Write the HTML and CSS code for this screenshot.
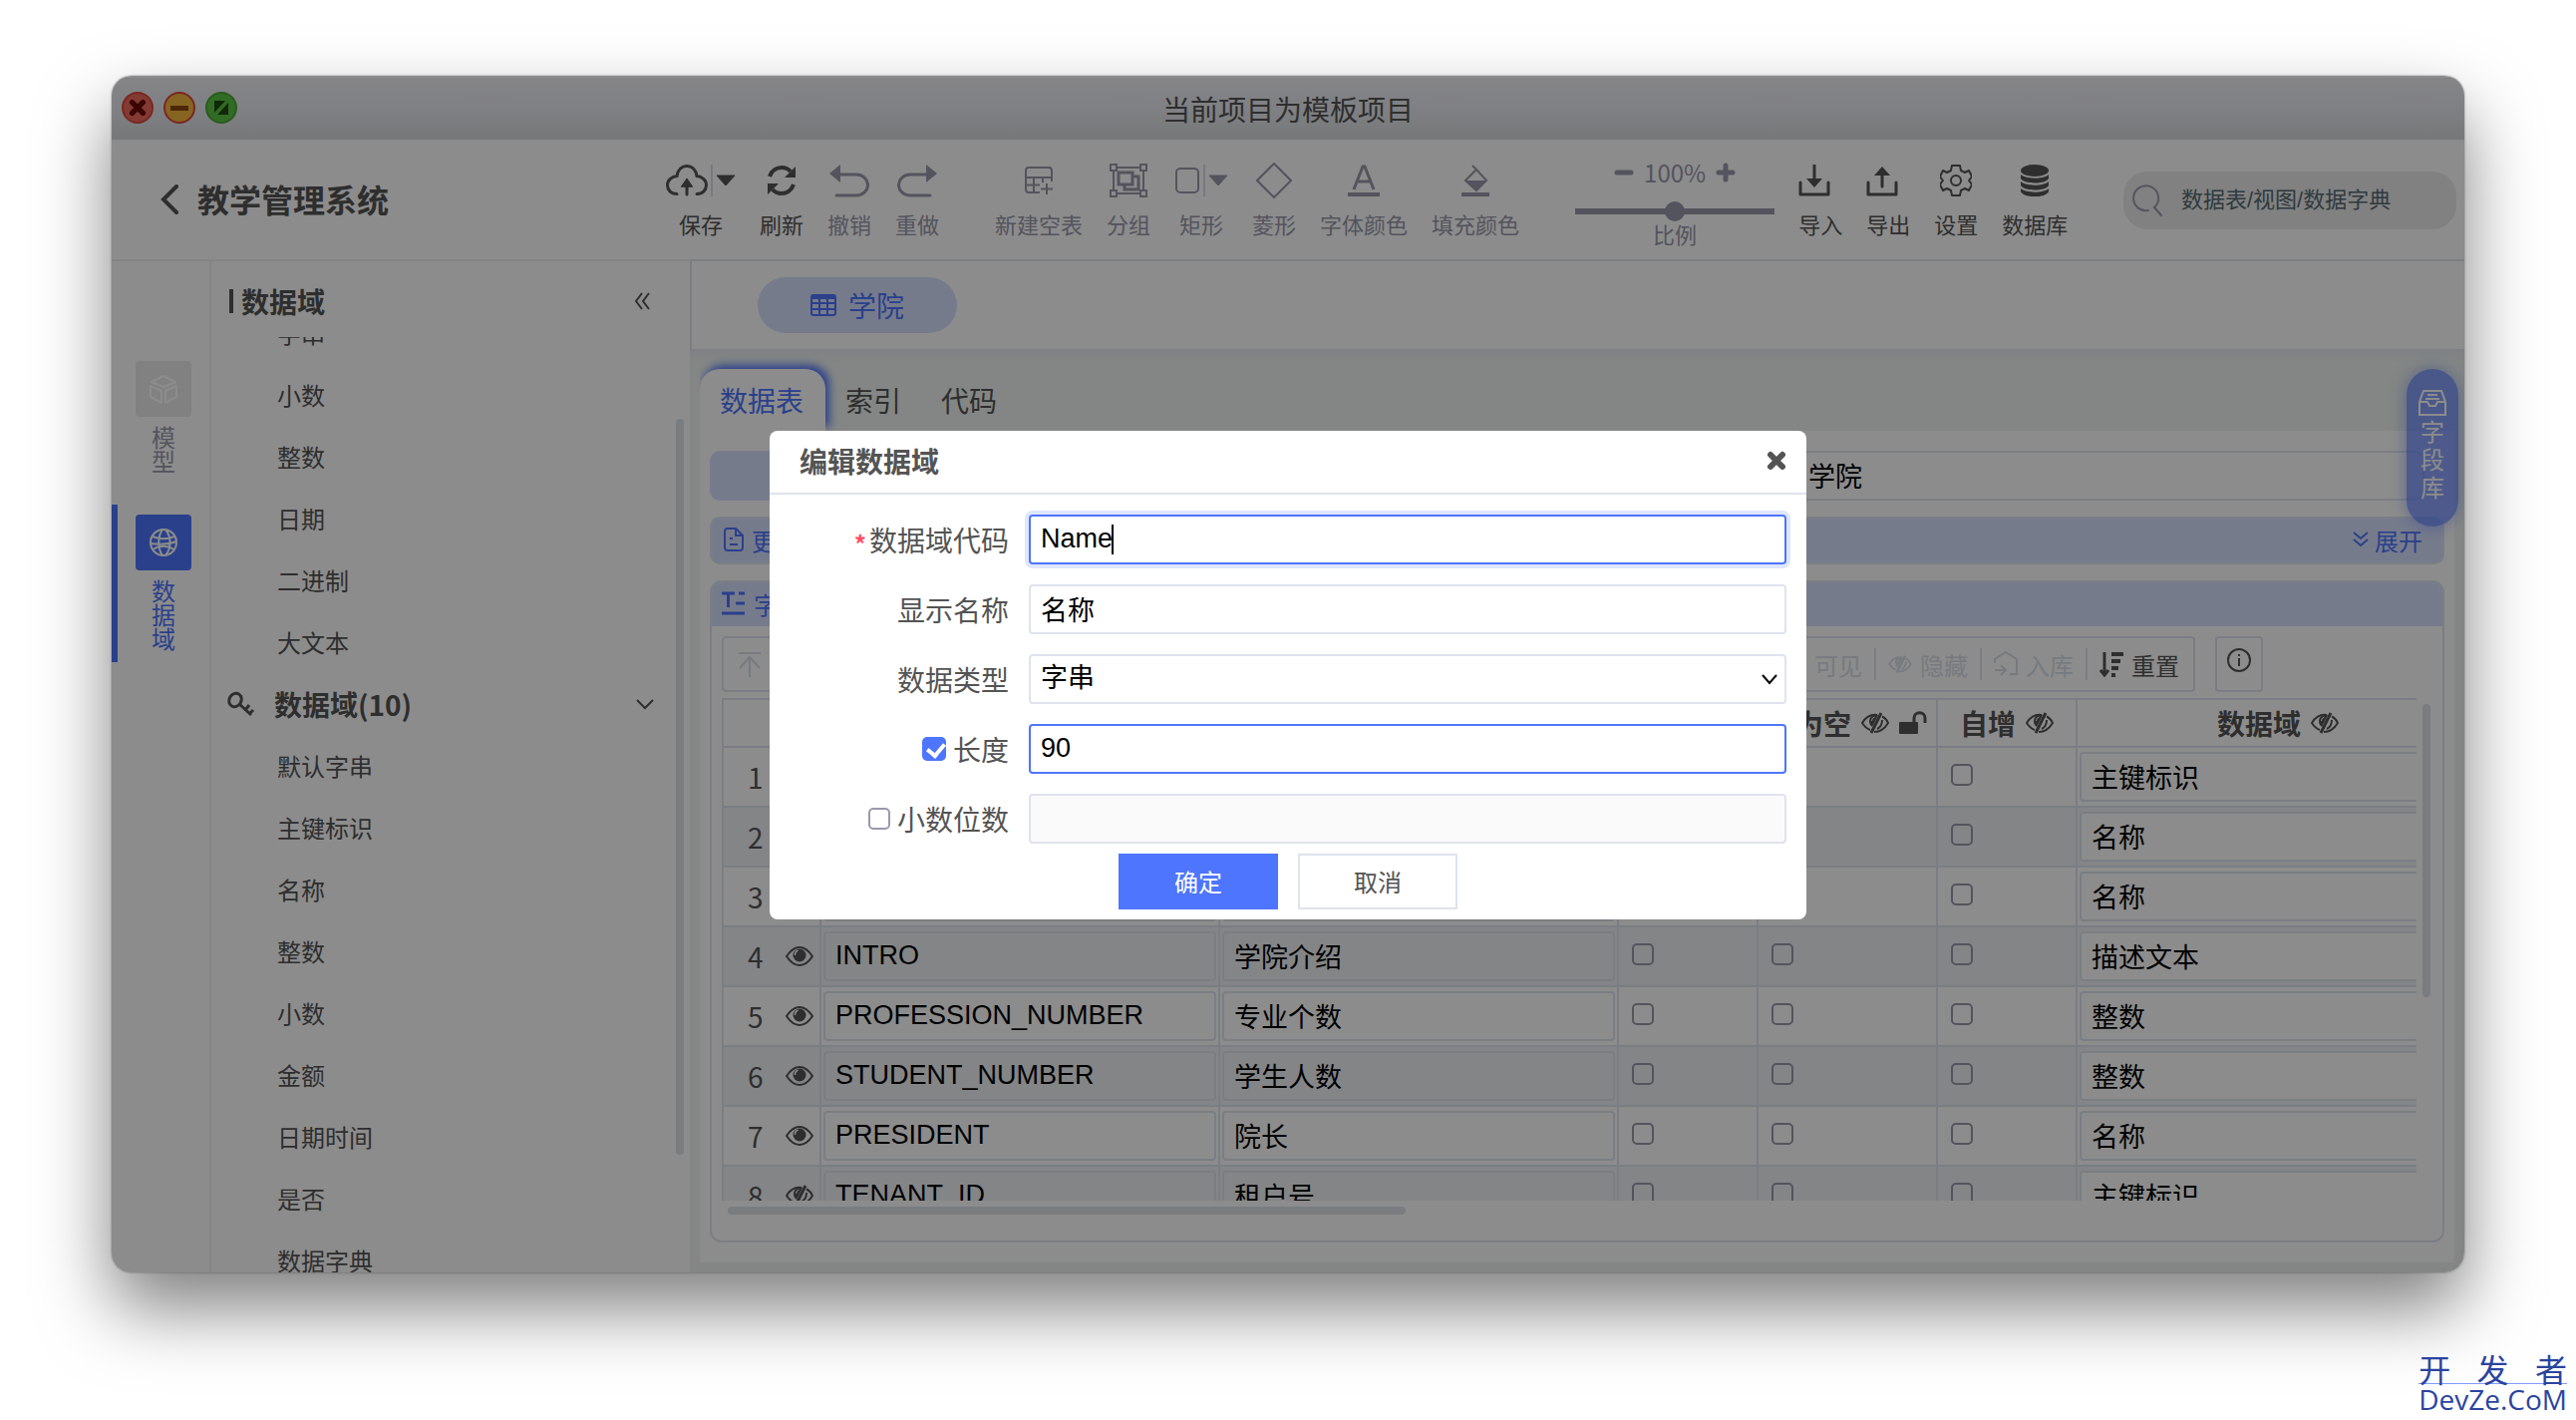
FILE: index.html
```html
<!DOCTYPE html>
<html lang="zh-CN">
<head>
    <meta charset="UTF-8">
    <meta name="viewport" content="width=device-width, initial-scale=1.0">
    <title>教学管理系统</title>
    <link rel="stylesheet" href="styles.css">
</head>
<body>
    <svg class="symbols" aria-hidden="true">
        <symbol id="i-eye" viewBox="0 0 28 24">
            <path d="M1 12C5 6 9 3 14 3S23 6 27 12C23 18 19 21 14 21S5 18 1 12z" fill="none" stroke="currentColor" stroke-width="2"/>
            <circle cx="14" cy="11" r="6.500" fill="currentColor"/>
            <path d="M9.500 11a5 5 0 0 1 3-5" fill="none" stroke="#fff" stroke-width="1.500"/>
        </symbol>
        <symbol id="i-eye-off" viewBox="0 0 28 24">
            <path d="M16 4C9 3 4 7 1 12c2 3 5 6 8 7M21 5.500c3 1.500 5 4 6 6.500-3 5-8 9-14 9M21 9c0 4-1 7-5 9" fill="none" stroke="currentColor" stroke-width="2"/>
            <path d="M17 4c-5-1-9 2-9 6 0 3 1 4 3 6z" fill="currentColor"/>
            <path d="M20 2L10 22" stroke="currentColor" stroke-width="3"/>
            <path d="M10.500 10a4 4 0 0 1 3-4" fill="none" stroke="#fff" stroke-width="1"/>
        </symbol>
        <symbol id="i-close" viewBox="0 0 20 20">
            <path d="M4 4l12 12M16 4L4 16" stroke="currentColor" stroke-width="6" stroke-linecap="round"/>
        </symbol>
        <symbol id="i-caret" viewBox="0 0 20 12"><path d="M1 1h18l-9 10z" fill="currentColor" stroke="currentColor" stroke-linejoin="round"/></symbol>
    </svg>

    <div class="window">
        <div class="titlebar">
            <div class="lights">
                <span class="light light-red"><svg width="18" height="18"><use href="#i-close"/></svg></span>
                <span class="light light-yellow"></span>
                <span class="light light-green"><svg width="16" height="16" viewBox="0 0 16 16"><path d="M1 1h11L1 13zM15 3v12H4z" fill="currentColor"/></svg></span>
            </div>
            <span>当前项目为模板项目</span>
        </div>

        <header class="header">
            <div class="brand">
                <svg width="20" height="30" viewBox="0 0 20 30"><path d="M17 2L4 15l13 13" fill="none" stroke="currentColor" stroke-width="4" stroke-linecap="round"/></svg>
                <h1>教学管理系统</h1>
            </div>
            <div class="tools">
                <button class="tool tool-split">
                    <span class="tool-icon">
                        <svg width="42" height="32" viewBox="0 0 42 32" fill="none" stroke="currentColor" stroke-width="3" stroke-linecap="round"><path d="M11 29.500C5 29.500 1.500 25.500 1.500 20.500S6 12 11 11.500C12 5 16 1.500 21 1.500S30 5 31 11.500C36 12 40.500 15.500 40.500 20.500S37 29.500 31 29.500M21 22v8"/><path d="M15.500 22L21 14l5.500 8z" fill="currentColor" stroke-width="1"/></svg>
                        <i class="split"></i>
                        <svg width="20" height="12"><use href="#i-caret"/></svg>
                    </span>
                    保存
                </button>
                <button class="tool">
                    <span class="tool-icon">
                        <svg width="30" height="34" viewBox="0 0 30 34"><path d="M3 13C5 7 10 4 15 4c4 0 7 1.500 9 4M27 21c-2 6-7 9-12 9-4 0-7-1.500-9-4" fill="none" stroke="currentColor" stroke-width="4"/><path d="M29 3v11H18zM1 31V20h11z" fill="currentColor"/></svg>
                    </span>
                    刷新
                </button>
                <button class="tool muted">
                    <span class="tool-icon">
                        <svg width="40" height="34" viewBox="0 0 40 34"><path d="M6 11h21a11 10 0 0 1 0 21H7" fill="none" stroke="currentColor" stroke-width="3" stroke-linecap="round"/><path d="M0 10L11 1v18z" fill="currentColor"/></svg>
                    </span>
                    撤销
                </button>
                <button class="tool muted">
                    <span class="tool-icon">
                        <svg width="40" height="34" viewBox="0 0 40 34"><path d="M34 11H13a11 10 0 0 0 0 21h20" fill="none" stroke="currentColor" stroke-width="3" stroke-linecap="round"/><path d="M40 10L29 1v18z" fill="currentColor"/></svg>
                    </span>
                    重做
                </button>
                <button class="tool muted tool-first">
                    <span class="tool-icon">
                        <svg width="28" height="28" viewBox="0 0 28 28" fill="none" stroke="currentColor" stroke-width="2"><path d="M15 26H4a3 3 0 0 1-3-3V4a3 3 0 0 1 3-3h20a3 3 0 0 1 3 3v11M1 11h26M1 18.500h14M9 11v15M18 11v5M22 17v11M16 22.500h12"/></svg>
                    </span>
                    新建空表
                </button>
                <button class="tool muted">
                    <span class="tool-icon">
                        <svg width="38" height="34" viewBox="0 0 38 34" fill="none" stroke="currentColor" stroke-width="2"><path d="M4 6v22M34 6v22M7 4h24M7 30h24"/><path d="M1 1h6v6H1zM31 1h6v6h-6zM1 27h6v6H1zM31 27h6v6h-6z"/><path d="M9 9h14v12H9zM23 13h6v13H15v-5" stroke-width="3"/></svg>
                    </span>
                    分组
                </button>
                <button class="tool muted tool-split">
                    <span class="tool-icon">
                        <svg width="26" height="28" viewBox="0 0 26 28"><rect x="2" y="2" width="22" height="24" rx="4" fill="none" stroke="currentColor" stroke-width="2"/></svg>
                        <i class="split"></i>
                        <svg width="20" height="12"><use href="#i-caret"/></svg>
                    </span>
                    矩形
                </button>
                <button class="tool muted">
                    <span class="tool-icon">
                        <svg width="36" height="36" viewBox="0 0 36 36"><path d="M18 1l17 17-17 17L1 18z" fill="none" stroke="currentColor" stroke-width="2"/></svg>
                    </span>
                    菱形
                </button>
                <button class="tool muted">
                    <span class="tool-icon">
                        <svg width="32" height="32" viewBox="0 0 32 32"><path d="M6 25L15 2h2l9 23M9 17h14" fill="none" stroke="currentColor" stroke-width="3"/><path d="M0 28h32v4H0z" fill="currentColor"/></svg>
                    </span>
                    字体颜色
                </button>
                <button class="tool muted">
                    <span class="tool-icon">
                        <svg width="28" height="32" viewBox="0 0 28 32"><path d="M11 1l4 4 10 11-10 10L4 16 15 5" fill="none" stroke="currentColor" stroke-width="2"/><path d="M4 16h21L15 27zM0 28h28v4H0z" fill="currentColor"/></svg>
                    </span>
                    填充颜色
                </button>
                <div class="zoom muted tool-first">
                    <div class="zoom-value">
                        <button aria-label="缩小"><svg width="20" height="20" viewBox="0 0 20 20"><path d="M3 10h14" stroke="currentColor" stroke-width="5" stroke-linecap="round"/></svg></button>
                        100%
                        <button aria-label="放大"><svg width="20" height="20" viewBox="0 0 20 20"><path d="M3 10h14M10 3v14" stroke="currentColor" stroke-width="5" stroke-linecap="round"/></svg></button>
                    </div>
                    <input type="range" id="scale" min="0" max="200" value="100">
                    <label for="scale">比例</label>
                </div>
                <button class="tool">
                    <span class="tool-icon icon-left">
                        <svg width="32" height="32" viewBox="0 0 32 32"><path d="M2 18v12h28V18M16 1v18" fill="none" stroke="currentColor" stroke-width="3" stroke-linecap="round" stroke-linejoin="round"/><path d="M8 14h16l-8 9z" fill="currentColor"/></svg>
                    </span>
                    导入
                </button>
                <button class="tool">
                    <span class="tool-icon icon-left">
                        <svg width="32" height="32" viewBox="0 0 32 32"><path d="M2 18v12h28V18M16 8v14" fill="none" stroke="currentColor" stroke-width="3" stroke-linecap="round" stroke-linejoin="round"/><path d="M8 11h16l-8-9z" fill="currentColor"/></svg>
                    </span>
                    导出
                </button>
                <button class="tool">
                    <span class="tool-icon">
                        <svg width="32" height="32" viewBox="0 0 32 32" fill="none" stroke="currentColor" stroke-width="2" stroke-linejoin="round"><path d="M12 1h8l1 5 4 2 4-2 3 6-3 4 3 4-3 6-4-2-4 2-1 5h-8l-1-5-4-2-4 2-3-6 3-4-3-4 3-6 4 2 4-2z"/><circle cx="16" cy="16" r="5"/></svg>
                    </span>
                    设置
                </button>
                <button class="tool">
                    <span class="tool-icon">
                        <svg width="28" height="32" viewBox="0 0 28 32" fill="currentColor"><ellipse cx="14" cy="6" rx="14" ry="6"/><path d="M0 10c5 5 23 5 28 0v4c-3 6-25 6-28 0zM0 17c5 5 23 5 28 0v4c-3 6-25 6-28 0zM0 24c5 5 23 5 28 0v3c-3 7-25 7-28 0z"/></svg>
                    </span>
                    数据库
                </button>
            </div>
            <div class="search">
                <svg width="32" height="32" viewBox="0 0 32 32"><path d="M17 26A12.500 12.500 0 1 1 23 23l7 8" fill="none" stroke="currentColor" stroke-width="2" stroke-linecap="round"/></svg>
                <input type="text" placeholder="数据表/视图/数据字典" aria-label="搜索">
            </div>
        </header>

        <div class="body">
            <nav class="nav">
                <a href="#" class="nav-item">
                    <span class="nav-icon"><svg width="28" height="30" viewBox="0 0 28 30" fill="none" stroke="currentColor" stroke-width="2" stroke-linejoin="round"><path d="M14 2l12 6-12 5L2 8zM1 12l11 5v12L1 23zM27 12l-11 5v12l11-6z"/></svg></span>
                    <span class="nav-text">模型</span>
                </a>
                <a href="#" class="nav-item active">
                    <span class="nav-icon"><svg width="30" height="30" viewBox="0 0 30 30" fill="none" stroke="currentColor" stroke-width="2"><circle cx="15" cy="15" r="13"/><path d="M14 2C9 9 9 21 14 28M17 2c6 7 6 19 0 26M4 9c7 3 15 3 22 0M4 22c7-4 15-4 22 0M2 16c8 1 18 1 26-2"/></svg></span>
                    <span class="nav-text">数据域</span>
                </a>
            </nav>

            <aside class="sidebar">
                <div class="sidebar-head">
                    <h2>数据域</h2>
                    <button aria-label="收起"><svg width="16" height="18" viewBox="0 0 16 18"><path d="M8 1L2 9l6 8M15 1L9 9l6 8" fill="none" stroke="currentColor" stroke-width="2"/></svg></button>
                </div>
                <div class="tree">
                    <ul>
                        <li>字串</li>
                        <li>小数</li>
                        <li>整数</li>
                        <li>日期</li>
                        <li>二进制</li>
                        <li>大文本</li>
                        <li class="group">
                            <svg width="28" height="26" viewBox="0 0 28 26" fill="none" stroke="currentColor"><ellipse cx="9" cy="9" rx="6" ry="7" transform="rotate(30 9 9)" stroke-width="3"/><path d="M13 13l12 11M19 19l4-5M23 23l4-4" stroke-width="3"/></svg>
                            数据域(10)
                            <svg class="arrow" width="18" height="12" viewBox="0 0 18 12"><path d="M1 2l8 8 8-8" fill="none" stroke="currentColor" stroke-width="2"/></svg>
                        </li>
                        <li>默认字串</li>
                        <li>主键标识</li>
                        <li>名称</li>
                        <li>整数</li>
                        <li>小数</li>
                        <li>金额</li>
                        <li>日期时间</li>
                        <li>是否</li>
                        <li>数据字典</li>
                    </ul>
                    <div class="tree-scroll"></div>
                </div>
            </aside>

            <main class="main">
                <div class="tabs">
                    <button class="tab">
                        <svg width="26" height="24" viewBox="0 0 26 24" fill="none" stroke="currentColor" stroke-width="2"><rect x="1" y="2" width="24" height="20" rx="2"/><path d="M1 4h24" stroke-width="4"/><path d="M1 10h24M1 16h24M9 4v18M17 4v18"/></svg>
                        学院
                    </button>
                </div>
                <div class="content">
                    <div class="subtabs">
                        <button class="subtab active">数据表</button>
                        <button class="subtab">索引</button>
                        <button class="subtab">代码</button>
                    </div>
                    <div class="panel">
                        <div class="names">
                            <label for="table-code">表代码</label>
                            <input type="text" id="table-code" value="COLLEGE">
                            <label for="table-name">显示名称</label>
                            <input type="text" id="table-name" value="学院">
                        </div>
                        <div class="more">
                            <svg width="20" height="24" viewBox="0 0 20 24" fill="none" stroke="currentColor" stroke-width="2"><path d="M12 1H4a3 3 0 0 0-3 3v16a3 3 0 0 0 3 3h12a3 3 0 0 0 3-3V8zM12 1v7h7M6 11h3M6 17h8"/></svg>
                            更多设置
                            <a href="#" class="expand"><svg width="16" height="16" viewBox="0 0 16 16"><path d="M1 1l7 6 7-6M1 8l7 6 7-6" fill="none" stroke="currentColor" stroke-width="2"/></svg>展开</a>
                        </div>
                        <section class="fields">
                            <h3>
                                <svg width="24" height="24" viewBox="0 0 24 24" fill="none" stroke="currentColor" stroke-width="3"><path d="M0 2h13M6.500 2v14M17 2h6M14 12h9M0 22h23"/></svg>
                                字段列表
                            </h3>
                            <div class="bar-row">
                                <div class="bar">
                                    <button disabled><svg width="24" height="28" viewBox="0 0 24 28" fill="none" stroke="currentColor" stroke-width="2"><path d="M1 3h22M12 8v19M2 18L12 7l10 11"/></svg>置顶</button>
                                    <button disabled class="push"><svg width="24" height="20"><use href="#i-eye"/></svg>可见</button>
                                    <button disabled><svg width="24" height="20"><use href="#i-eye-off"/></svg>隐藏</button>
                                    <button disabled><svg width="24" height="26" viewBox="0 0 24 26" fill="none" stroke="currentColor" stroke-width="2"><path d="M1 12V8l11-7 11 7v15h-7M1 19h10M7 14l5 5-5 5"/></svg>入库</button>
                                    <button><svg width="24" height="26" viewBox="0 0 24 26" fill="none" stroke="currentColor" stroke-width="4"><path d="M5 1v22" stroke-width="3"/><path d="M1 19l4 5 4-5" stroke-width="3"/><path d="M12 3h12M12 10h9M12 17h7M12 24h4"/></svg>重置</button>
                                </div>
                                <button class="info" aria-label="说明"><svg width="24" height="24" viewBox="0 0 24 24" fill="none" stroke="currentColor" stroke-width="2"><circle cx="12" cy="12" r="11"/><path d="M12 10v8M12 6v2"/></svg></button>
                            </div>
                            <div class="table-area">
                                <div class="table-clip">
                                    <table>
                                        <colgroup>
                                            <col class="c-no"><col class="c-code"><col class="c-name"><col class="c-key"><col class="c-null"><col class="c-auto"><col class="c-domain">
                                        </colgroup>
                                        <thead>
                                            <tr>
                                                <th></th>
                                                <th>字段代码</th>
                                                <th>显示名称</th>
                                                <th>主键</th>
                                                <th><span>不为空 <svg width="28" height="24"><use href="#i-eye-off"/></svg><svg width="28" height="24" viewBox="0 0 28 24"><rect y="11" width="19" height="12" rx="1" fill="currentColor"/><path d="M15 11V7c0-7 11-7 11 0v5" fill="none" stroke="currentColor" stroke-width="3"/></svg></span></th>
                                                <th><span>自增 <svg width="28" height="24"><use href="#i-eye-off"/></svg></span></th>
                                                <th><span>数据域 <svg width="28" height="24"><use href="#i-eye-off"/></svg></span></th>
                                            </tr>
                                        </thead>
                                        <tbody id="rows"></tbody>
                                    </table>
                                </div>
                                <div class="scroll-y"></div>
                                <div class="scroll-x"></div>
                            </div>
                        </section>
                    </div>
                </div>
                <button class="library">
                    <svg width="28" height="28" viewBox="0 0 28 28" fill="none" stroke="currentColor" stroke-width="2"><path d="M1 13L5 2h18l4 11v13H1zM1 13h8l2 4h6l2-4h8M9 6h10M7 10h14"/></svg>
                    <span>字段库</span>
                </button>
            </main>
        </div>

        <div class="mask">
            <form class="dialog" role="dialog" aria-labelledby="dialog-title">
                <div class="dialog-head">
                    <h2 id="dialog-title">编辑数据域</h2>
                    <button type="button" aria-label="关闭"><svg width="20" height="20"><use href="#i-close"/></svg></button>
                </div>
                <div class="dialog-body">
                    <label for="code"><b class="required">*</b>数据域代码</label>
                    <div class="focus-field">
                        <input type="text" id="code" class="field focused" value="Name">
                        <i class="text-caret"></i>
                    </div>

                    <label for="label">显示名称</label>
                    <input type="text" id="label" class="field" value="名称">

                    <label for="type">数据类型</label>
                    <div class="select">
                        <select id="type" class="field">
                            <option>字串</option>
                            <option>小数</option>
                            <option>整数</option>
                        </select>
                        <svg width="18" height="12" viewBox="0 0 18 12"><path d="M2 2l7 8 7-8" fill="none" stroke="currentColor" stroke-width="2"/></svg>
                    </div>

                    <label><input type="checkbox" class="check" checked>长度</label>
                    <input type="text" class="field outlined" value="90" aria-label="长度">

                    <label><input type="checkbox" class="check">小数位数</label>
                    <input type="text" class="field" disabled aria-label="小数位数">
                </div>
                <div class="dialog-foot">
                    <button type="button" class="btn primary">确定</button>
                    <button type="button" class="btn">取消</button>
                </div>
            </form>
        </div>
    </div>

    <div class="watermark">
        <div class="watermark-cn"><span>开</span><span>发</span><span>者</span></div>
        <div>DevZe.CoM</div>
    </div>

    <script>
        const fields = [
            ['COLLEGE_ID', '学院ID', '主键标识', true],
            ['COLLEGE_NAME', '学院名称', '名称', true],
            ['ENG_NAME', '英文名', '名称', true],
            ['INTRO', '学院介绍', '描述文本', true],
            ['PROFESSION_NUMBER', '专业个数', '整数', true],
            ['STUDENT_NUMBER', '学生人数', '整数', true],
            ['PRESIDENT', '院长', '名称', true],
            ['TENANT_ID', '租户号', '主键标识', false]
        ];

        let html = '';
        fields.forEach((field, index) => {
            const [code, name, domain, visible] = field;
            html += `<tr>
                <td><div class="row-no">${index + 1}<svg width="28" height="24"><use href="#${visible ? 'i-eye' : 'i-eye-off'}"/></svg></div></td>
                <td><input type="text" value="${code}" aria-label="字段代码"></td>
                <td><input type="text" value="${name}" aria-label="显示名称"></td>
                <td><input type="checkbox" class="check" aria-label="主键"></td>
                <td><input type="checkbox" class="check" aria-label="不为空"></td>
                <td><input type="checkbox" class="check" aria-label="自增"></td>
                <td><input type="text" class="domain" value="${domain}" aria-label="数据域"></td>
            </tr>`;
        });
        document.getElementById('rows').innerHTML = html;
    </script>
</body>
</html>
```

FILE: styles.css
```css
* {
    box-sizing: border-box;
}
body {
    margin: 0;
    height: 100vh;
    padding: 76px 112px 148px;
    background: white;
    color: #545454;
    font-family: "Noto Sans CJK SC", sans-serif;
    font-size: 24px;
}
h1, h2, h3, ul {
    margin: 0;
    padding: 0;
}
button {
    border: none;
    background: none;
    padding: 0;
    color: inherit;
    font: inherit;
    cursor: pointer;
}
input, select {
    font-family: "Liberation Sans", "Noto Sans CJK SC", sans-serif;
    font-size: 27px;
    color: black;
}
a {
    color: inherit;
    text-decoration: none;
}
svg {
    display: block;
    flex: none;
}
.symbols {
    position: absolute;
    width: 0;
    height: 0;
}
.window {
    position: relative;
    height: 100%;
    display: flex;
    flex-direction: column;
    border-radius: 20px;
    overflow: hidden;
    background: white;
    box-shadow: 0 0 2px rgba(0, 0, 0, 0.5), 0 36px 72px rgba(0, 0, 0, 0.5);
}

/* title bar */
.titlebar {
    flex: none;
    height: 64px;
    padding: 0 10px;
    display: grid;
    grid-template-columns: 1fr auto 1fr;
    align-items: center;
    font-size: 28px;
    background: linear-gradient(#f0f1f5, #e8eaf0 50%, #d8dadc);
    border-top: 2px solid white;
}
.lights {
    display: flex;
    gap: 10px;
    padding-bottom: 2px;
}
.light {
    width: 32px;
    height: 32px;
    border-radius: 50%;
    display: flex;
    align-items: center;
    justify-content: center;
}
.light-red {
    background: #ee6a5e;
    border: 2px solid #e0453c;
    color: #6b0a05;
}
.light-yellow {
    background: #f5b93e;
    border: 2px solid #e0453c;
}
.light-yellow::before {
    content: "";
    width: 18px;
    height: 5px;
    background: #8a4a10;
}
.light-green {
    background: #5cc442;
    border: 2px solid #4aa836;
    color: #1a4a10;
}

/* header */
.header {
    flex: none;
    height: 120px;
    display: flex;
    align-items: flex-start;
    padding: 20px 8px 0 48px;
}
.brand {
    width: 508px;
    height: 80px;
    display: flex;
    align-items: center;
    gap: 18px;
}
.brand h1 {
    font-size: 32px;
    line-height: 32px;
    padding-bottom: 2px;
}
.tools {
    display: flex;
    align-items: flex-start;
    gap: 24px;
}
.tool {
    font-size: 22px;
    line-height: 28px;
    white-space: nowrap;
}
.tool-first {
    margin-left: 32px;
}
.tool-icon {
    height: 42px;
    margin-bottom: 8px;
    display: flex;
    align-items: center;
    justify-content: center;
}
.icon-left {
    justify-content: flex-start;
}
.split {
    width: 2px;
    height: 32px;
    margin: 0 3px;
    background: #d8dce6;
}
.muted {
    color: #9999ac;
}
.zoom {
    width: 200px;
    display: flex;
    flex-direction: column;
    align-items: center;
    font-size: 22px;
    line-height: 24px;
}
.zoom-value {
    height: 26px;
    margin-bottom: 16px;
    display: flex;
    align-items: center;
    gap: 10px;
    font-size: 24px;
}
.zoom input {
    appearance: none;
    width: 100%;
    height: 20px;
    margin: 0;
    background: none;
}
.zoom input::-webkit-slider-runnable-track {
    height: 6px;
    background: #9999ac;
}
.zoom input::-webkit-slider-thumb {
    appearance: none;
    width: 20px;
    height: 20px;
    margin-top: -7px;
    border-radius: 50%;
    background: #9999ac;
}
.search {
    width: 334px;
    height: 58px;
    margin: 12px 0 0 auto;
    padding: 0 8px;
    display: flex;
    align-items: center;
    gap: 18px;
    border-radius: 24px;
    background: #ebebeb;
    color: #9999ac;
}
.search input {
    flex: 1;
    min-width: 0;
    padding: 0;
    border: none;
    background: none;
    font-size: 22px;
}
.search input::placeholder {
    color: #576a72;
}

/* left side */
.body {
    flex: 1;
    min-height: 0;
    display: flex;
}
.nav {
    width: 100px;
    flex: none;
    padding-top: 90px;
    border-top: 2px solid #f0f0f0;
    border-right: 2px solid #f0f0f0;
    color: #9999ac;
}
.nav-item {
    margin-bottom: 20px;
    padding: 10px 0 12px;
    display: flex;
    flex-direction: column;
    align-items: center;
    gap: 8px;
    line-height: 24px;
    border-left: 6px solid transparent;
}
.nav-icon {
    width: 56px;
    height: 56px;
    display: flex;
    align-items: center;
    justify-content: center;
    border-radius: 4px;
    background: #ececec;
    color: white;
}
.nav-text {
    width: 24px;
}
.nav-item.active {
    border-left-color: #4e75fd;
    color: #4e75fd;
}
.nav-item.active .nav-icon {
    background: #4e75fd;
}
.sidebar {
    width: 480px;
    flex: none;
    display: flex;
    flex-direction: column;
    border-top: 2px solid #f0f0f0;
}
.sidebar-head {
    height: 76px;
    flex: none;
    padding: 4px 40px 0 18px;
    display: flex;
    align-items: center;
    justify-content: space-between;
}
.sidebar-head h2 {
    padding-left: 8px;
    border-left: 4px solid #545454;
    font-size: 28px;
    line-height: 24px;
}
.tree {
    position: relative;
    flex: 1;
    min-height: 0;
    overflow: hidden;
}
.tree ul {
    margin-top: -35px;
    list-style: none;
}
.tree li {
    height: 62px;
    padding-left: 66px;
    line-height: 62px;
}
.tree .group {
    display: flex;
    align-items: center;
    gap: 20px;
    padding: 0 36px 0 15px;
    font-size: 28px;
    font-weight: bold;
}
.tree .arrow {
    margin-left: auto;
}
.tree-scroll {
    position: absolute;
    top: 82px;
    right: 6px;
    bottom: 118px;
    width: 8px;
    border-radius: 4px;
    background: #dce4ea;
}

/* main */
.main {
    position: relative;
    flex: 1;
    min-width: 0;
    display: flex;
    flex-direction: column;
}
.tabs {
    flex: none;
    height: 90px;
    padding: 16px 66px;
    border-top: 2px solid #dfe6ee;
    border-left: 2px solid #dfe6ee;
}
.tab {
    width: 200px;
    height: 56px;
    display: flex;
    align-items: center;
    justify-content: center;
    gap: 12px;
    border-radius: 28px;
    background: #d8e1ff;
    color: #4e75fd;
    font-size: 28px;
}
.content {
    flex: 1;
    min-height: 0;
    display: flex;
    flex-direction: column;
    padding: 0 10px 10px;
    background: #eff4f0;
    box-shadow: inset 0 10px 8px -4px #e6eaf2;
}
.subtabs {
    flex: none;
    height: 82px;
    padding-top: 20px;
    display: flex;
    overflow: hidden;
}
.subtab {
    padding: 0 20px;
    font-size: 28px;
}
.subtab.active {
    padding-right: 22px;
    border-radius: 20px 20px 0 0;
    background: white;
    color: #4e75fd;
    box-shadow: 4px -4px 8px #4e75fd;
}
.panel {
    flex: 1;
    min-height: 0;
    display: flex;
    flex-direction: column;
    gap: 16px;
    padding: 20px 10px;
    background: white;
}
.names {
    flex: none;
    display: grid;
    grid-template-columns: 230px 1fr 230px 1fr;
    padding-right: 20px;
}
.names label {
    height: 50px;
    line-height: 50px;
    text-align: center;
    border-radius: 10px 0 0 10px;
    background: #d8e1ff;
}
.names input {
    min-width: 0;
    height: 50px;
    padding: 0 10px 2px;
    border: 2px solid #dfe6ee;
    border-radius: 0 10px 10px 0;
}
.more {
    flex: none;
    height: 48px;
    padding: 0 20px 2px 12px;
    display: flex;
    align-items: center;
    gap: 8px;
    border: 2px solid #dfe6ee;
    border-radius: 10px;
    background: #d8e1ff;
    color: #4e75fd;
}
.expand {
    margin-left: auto;
    display: flex;
    align-items: center;
    gap: 6px;
}
.fields {
    flex: 1;
    min-height: 0;
    display: flex;
    flex-direction: column;
    border: 2px solid #dfe6ee;
    border-radius: 12px;
    overflow: hidden;
}
.fields h3 {
    flex: none;
    height: 44px;
    padding: 0 0 2px 10px;
    display: flex;
    align-items: center;
    gap: 8px;
    background: #d8e1ff;
    color: #4e75fd;
    font-size: 24px;
    font-weight: normal;
}
.bar-row {
    flex: none;
    display: flex;
    gap: 20px;
    margin: 10px 180px 6px 10px;
}
.bar {
    flex: 1;
    height: 56px;
    display: flex;
    align-items: center;
    padding: 0 2px;
    border: 2px solid #dfe6ee;
    border-radius: 4px;
}
.bar button {
    height: 32px;
    padding: 0 12px;
    display: flex;
    align-items: center;
    gap: 8px;
    border-left: 2px solid #dfe6ee;
}
.bar button:first-child {
    border-left: none;
}
.bar button:disabled {
    color: #d8dfe8;
}
.bar .push {
    margin-left: auto;
}
.info {
    width: 48px;
    height: 56px;
    padding-bottom: 8px;
    display: flex;
    align-items: center;
    justify-content: center;
    border: 2px solid #dfe6ee;
    border-radius: 4px;
}
.table-area {
    flex: 1;
    min-height: 0;
    display: grid;
    grid-template-columns: 1fr 8px;
    grid-template-rows: 1fr 8px;
    gap: 6px;
    padding: 0 12px 26px 10px;
}
.table-clip {
    min-width: 0;
    min-height: 0;
    overflow: hidden;
}
.scroll-y {
    height: 294px;
    margin-top: 6px;
    border-radius: 4px;
    background: #dce4ea;
}
.scroll-x {
    width: 40%;
    margin-left: 6px;
    border-radius: 4px;
    background: #dce4ea;
}
table {
    width: 1764px;
    table-layout: fixed;
    border-collapse: separate;
    border-spacing: 0;
    border-top: 2px solid #dfe6ee;
    border-left: 2px solid #dfe6ee;
}
.c-no {
    width: 98px;
}
.c-code, .c-name {
    width: 400px;
}
.c-domain {
    width: 404px;
}
.c-key, .c-auto {
    width: 140px;
}
.c-null {
    width: 180px;
}
th {
    height: 48px;
    padding: 0;
    font-size: 28px;
    line-height: 44px;
    border-right: 2px solid #dfe6ee;
    border-bottom: 2px solid #dfe6ee;
}
th span {
    display: flex;
    align-items: center;
    justify-content: center;
    gap: 10px;
}
td {
    height: 60px;
    padding: 0 2px;
    border-right: 2px solid #dfe6ee;
    border-bottom: 2px solid #dfe6ee;
}
tbody tr:nth-child(even) {
    background: #f0f2f6;
}
td input[type="text"] {
    display: block;
    width: 100%;
    height: 50px;
    padding: 0 10px 2px;
    border: 2px solid #dfe6ee;
    border-radius: 4px;
    background: none;
}
td input.domain {
    background: white;
}
td .check {
    display: block;
    margin: 0 11px 4px;
}
.row-no {
    display: flex;
    align-items: center;
    justify-content: space-between;
    padding: 0 4px 0 22px;
    font-size: 28px;
}
.library {
    position: absolute;
    top: 110px;
    right: 6px;
    width: 52px;
    height: 158px;
    padding-bottom: 6px;
    display: flex;
    flex-direction: column;
    align-items: center;
    justify-content: center;
    border-radius: 26px;
    background: rgba(78, 117, 253, 0.65);
    box-shadow: 0 0 16px rgba(78, 117, 253, 0.5);
    color: white;
    line-height: 28px;
}
.library span {
    width: 24px;
}

/* dialog */
.mask {
    position: absolute;
    inset: 0;
    display: flex;
    align-items: center;
    justify-content: center;
    padding-top: 2px;
    background: rgba(0, 0, 0, 0.45);
}
.dialog {
    width: 1040px;
    border-radius: 8px;
    background: white;
}
.dialog-head {
    height: 64px;
    padding: 0 20px 2px 30px;
    display: flex;
    align-items: center;
    justify-content: space-between;
    border-bottom: 2px solid #dfe3ee;
}
.dialog-head h2 {
    font-size: 28px;
}
.dialog-body {
    display: grid;
    grid-template-columns: 240px 1fr;
    gap: 20px;
    padding: 20px 20px 10px 0;
}
.dialog-body label {
    display: flex;
    align-items: center;
    justify-content: flex-end;
    gap: 7px;
    font-size: 28px;
    line-height: 48px;
}
.required {
    padding-top: 8px;
    color: #ff4d5f;
    font-size: 24px;
    line-height: 24px;
    font-weight: bold;
}
.dialog-body label .required {
    margin-right: -4px;
}
.field {
    display: block;
    width: 100%;
    height: 50px;
    padding: 0 10px 2px;
    border: 2px solid #dfe3ee;
    border-radius: 4px;
    background: white;
    outline: none;
}
.field:disabled {
    background: #fafafa;
}
.outlined {
    border-color: #4e75fd;
}
.focused {
    border-color: #4e75fd;
    box-shadow: 0 0 0 4px #dfe6ff;
}
.focus-field, .select {
    position: relative;
}
.text-caret {
    position: absolute;
    top: 10px;
    left: 83px;
    width: 2px;
    height: 30px;
    background: black;
}
.select select {
    appearance: none;
}
.select svg {
    position: absolute;
    top: 19px;
    right: 8px;
    color: black;
}
.check {
    appearance: none;
    width: 22px;
    height: 22px;
    margin: 0;
    border: 2px solid #9999ac;
    border-radius: 5px;
    background: white;
}
tr:nth-child(even) .check {
    background: none;
}
.check:checked {
    width: 24px;
    height: 24px;
    border: none;
    background: #4e75fd;
}
.check:checked::before {
    content: "";
    display: block;
    width: 8px;
    height: 13px;
    margin: 3px 0 0 8px;
    border-right: 4px solid white;
    border-bottom: 4px solid white;
    transform: rotate(40deg);
}
.dialog-foot {
    display: flex;
    justify-content: center;
    gap: 20px;
    padding-bottom: 10px;
}
.btn {
    width: 160px;
    height: 56px;
    padding-bottom: 2px;
    border: 2px solid #dfe3ee;
}
.btn.primary {
    border-color: #4e75fd;
    background: #4e75fd;
    color: white;
}

/* corner mark */
.watermark {
    position: absolute;
    right: 9px;
    bottom: 6px;
    font-family: "Open Sans", sans-serif;
    font-size: 28px;
    line-height: 30px;
    color: #2b449f;
}
.watermark-cn {
    display: flex;
    justify-content: space-between;
    font-family: "Noto Sans CJK SC", sans-serif;
    font-size: 32px;
    border-bottom: 1px solid #7f9bff;
}
```
